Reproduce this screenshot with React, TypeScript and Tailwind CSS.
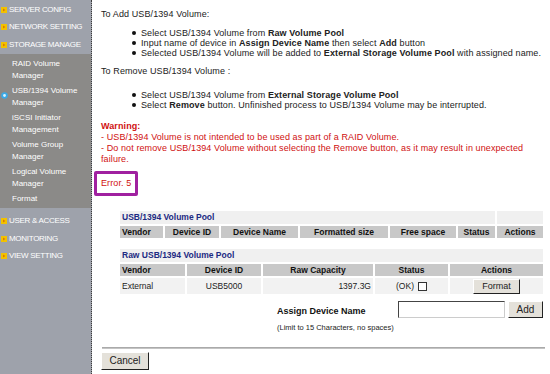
import React from 'react';

function MenuIcon() {
  return (
    <svg width="6" height="6" viewBox="0 0 6 6" className="shrink-0">
      <rect width="6" height="6" fill="#f2c200" />
      <path d="M2 1.5 L4.5 3 L2 4.5 Z" fill="#e07a00" />
    </svg>
  );
}

function ActiveDot() {
  return (
    <svg width="7" height="7" viewBox="0 0 7 7" className="shrink-0">
      <circle cx="3.5" cy="3.5" r="3.3" fill="#3aa9e6" />
      <circle cx="3.5" cy="3.5" r="1.4" fill="#d8f2ff" />
    </svg>
  );
}

function TopItem({ label }: { label: string }) {
  return (
    <div className="flex items-center gap-[2px] h-[17.5px] pl-[1px] text-white text-[8px] tracking-[-0.3px]">
      <MenuIcon />
      <span>{label}</span>
    </div>
  );
}

function SubItem({ lines, active }: { lines: string[]; active?: boolean }) {
  return (
    <div className="relative pl-[12px] py-[1.5px] text-white text-[8px] leading-[12px]">
      {active && (
        <span className="absolute left-[1px] top-[8px]">
          <ActiveDot />
        </span>
      )}
      {lines.map((l) => (
        <div key={l}>{l}</div>
      ))}
    </div>
  );
}

function Sidebar() {
  return (
    <div className="w-[92px] shrink-0 bg-[#9ea2ab] border-r border-dotted border-[#3c3c3c] h-[374px] pt-[1px]">
      <TopItem label="SERVER CONFIG" />
      <TopItem label="NETWORK SETTING" />
      <TopItem label="STORAGE MANAGE" />
      <div className="bg-[#8b8a88] pt-[3px] pb-[1px] mb-[5px]">
        <SubItem lines={['RAID Volume', 'Manager']} />
        <SubItem lines={['USB/1394 Volume', 'Manager']} active />
        <SubItem lines={['iSCSI Initiator', 'Management']} />
        <SubItem lines={['Volume Group', 'Manager']} />
        <SubItem lines={['Logical Volume', 'Manager']} />
        <SubItem lines={['Format']} />
      </div>
      <TopItem label="USER & ACCESS" />
      <TopItem label="MONITORING" />
      <TopItem label="VIEW SETTING" />
    </div>
  );
}

function Bullet({ children }: { children: React.ReactNode }) {
  return (
    <li className="flex items-center h-[10px]">
      <span className="w-[4px] h-[4px] rounded-full bg-[#111] ml-[31px] mr-[5px] shrink-0" />
      <span className="whitespace-nowrap">{children}</span>
    </li>
  );
}

const hd = 'bg-[#c8c8c8] font-bold text-[#111] h-[12px] px-[2px] leading-[12px]';
const cell = 'bg-[#f2f2f2] h-[16px] px-[2px]';
const btn = 'bg-[#e4e1da] border border-t-white border-l-white border-r-[#222] border-b-[#222]';

export default function App() {
  return (
    <div className="flex w-[550px] h-[374px] bg-white overflow-hidden" style={{ fontFamily: '"Liberation Sans", Arial, sans-serif' }}>
      <Sidebar />
      <div className="flex-1 pl-[9px] pr-[6px] text-[9px] tracking-[0.1px] text-[#222]">
        <p className="mt-[9px] leading-[11px]">To Add USB/1394 Volume:</p>
        <ul className="mt-[8px] leading-[10px]">
          <Bullet>Select USB/1394 Volume from <b>Raw Volume Pool</b></Bullet>
          <Bullet>Input name of device in <b>Assign Device Name</b> then select <b>Add</b> button</Bullet>
          <Bullet>Selected USB/1394 Volume will be added to <b>External Storage Volume Pool</b> with assigned name.</Bullet>
        </ul>
        <p className="mt-[8px] leading-[11px]">To Remove USB/1394 Volume :</p>
        <ul className="mt-[13px] leading-[10px]">
          <Bullet>Select USB/1394 Volume from <b>External Storage Volume Pool</b></Bullet>
          <Bullet>Select <b>Remove</b> button. Unfinished process to USB/1394 Volume may be interrupted.</Bullet>
        </ul>
        <div className="mt-[11px] text-[#d01010] leading-[11px]">
          <div className="font-bold">Warning:</div>
          <div>- USB/1394 Volume is not intended to be used as part of a RAID Volume.</div>
          <div>- Do not remove USB/1394 Volume without selecting the Remove button, as it may result in unexpected failure.</div>
        </div>
        <div className="mt-[6px] -ml-[7px] w-[44px] h-[25px] border-[3px] border-[#a020a0] rounded-[2px] flex items-center pl-[4px] text-[#d01010] text-[9px]">
          Error. 5
        </div>

        <table className="ml-[17px] mt-[13px] border-separate border-spacing-[2px] w-[427px] text-[8.5px] tracking-normal">
          <tbody>
            <tr>
              <td colSpan={6} className="bg-[#f0f0f0] h-[13px] px-[2px] font-bold text-[#1c2a82]">USB/1394 Volume Pool</td>
              <td className="bg-[#f0f0f0]" />
            </tr>
            <tr>
              <td className={`${hd} w-[43px] text-left`}>Vendor</td>
              <td className={`${hd} w-[54px] text-center`}>Device ID</td>
              <td className={`${hd} w-[77px] text-center`}>Device Name</td>
              <td className={`${hd} w-[88px] text-center`}>Formatted size</td>
              <td className={`${hd} w-[66px] text-center`}>Free space</td>
              <td className={`${hd} w-[37px] text-center`}>Status</td>
              <td className={`${hd} text-center`}>Actions</td>
            </tr>
          </tbody>
        </table>

        <table className="ml-[17px] mt-[7px] border-separate border-spacing-[2px] w-[427px] text-[8.5px] tracking-normal">
          <tbody>
            <tr>
              <td colSpan={5} className="bg-[#f0f0f0] h-[13px] px-[2px] font-bold text-[#1c2a82]">Raw USB/1394 Volume Pool</td>
            </tr>
            <tr>
              <td className={`${hd} w-[65px] text-left`}>Vendor</td>
              <td className={`${hd} w-[74px] text-center`}>Device ID</td>
              <td className={`${hd} w-[110px] text-center`}>Raw Capacity</td>
              <td className={`${hd} w-[73px] text-center`}>Status</td>
              <td className={`${hd} text-center`}>Actions</td>
            </tr>
            <tr>
              <td className={cell}>External</td>
              <td className={`${cell} text-center`}>USB5000</td>
              <td className={`${cell} text-right`}>1397.3G</td>
              <td className={`${cell} text-center`}>
                <span className="inline-flex items-center gap-[4px]">
                  (OK)
                  <span className="inline-block w-[9px] h-[9px] border border-[#333] bg-white" />
                </span>
              </td>
              <td className={`${cell} text-center`}>
                <button className={`${btn} h-[15px] px-[8px] text-[9px] leading-[13px]`}>Format</button>
              </td>
            </tr>
          </tbody>
        </table>

        <div className="flex mt-[5px] pl-[176px] tracking-normal">
          <div className="w-[121px]">
            <div className="font-bold text-[9px] text-[#111] mt-[4px]">Assign Device Name</div>
            <div className="text-[7.5px] mt-[3px] whitespace-nowrap">(Limit to 15 Characters, no spaces)</div>
          </div>
          <div className="w-[107px] h-[17px] border border-t-[#444] border-l-[#444] border-r-[#ccc] border-b-[#ccc] bg-white" />
          <button className={`${btn} ml-[3px] w-[35px] h-[17px] text-[10px]`}>Add</button>
        </div>

        <div className="mt-[14px] ml-[1px] h-[2px] bg-[#c4c4c4] border-t border-[#aaa]" />
        <button className={`${btn} mt-[3px] w-[48px] h-[18px] text-[10px] tracking-normal`}>Cancel</button>
      </div>
    </div>
  );
}
